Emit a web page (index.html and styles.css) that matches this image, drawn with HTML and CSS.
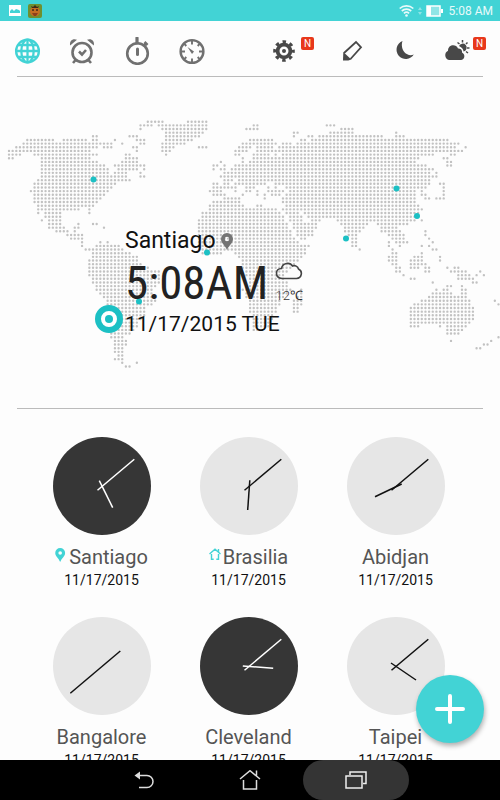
FILE: index.html
```html
<!DOCTYPE html>
<html lang="en">
<head>
  <meta charset="UTF-8" />
  <title>World Clock</title>
  <meta name="viewport" content="width=device-width, initial-scale=1.0" />
  <link rel="stylesheet" href="styles.css">
</head>

<body>

  <div class="status-bar">
    <div class="status-group">
      <svg width="12" height="11" viewBox="0 0 12 11"><rect width="12" height="11" fill="#fff"/><path d="M1 8V6l2-2 2 2 2-2 3 1 1 1v2z" fill="#42d3d5"/></svg>
      <svg width="14" height="14" viewBox="0 0 14 14"><rect width="14" height="14" rx="2" fill="#6f8f2e"/><circle cx="7" cy="7.500" r="5" fill="#c46d22"/><path d="M3 2l1 2h6l1-2-2 1-2-2-2 2z" fill="#3c2a18"/><circle cx="5" cy="6" r="1" fill="#3c2a18"/><circle cx="9" cy="6" r="1" fill="#3c2a18"/><path d="M4 9h6l-2 3H6z" fill="#8c3f1c"/></svg>
    </div>
    <div class="status-group status-right">
      <svg width="15" height="13" viewBox="0 0 15 13" fill="none" stroke="#e8fafa" stroke-width="1.700"><path d="M.7 4.500a10 10 0 0 1 13.600 0M2.800 7a7 7 0 0 1 9.400 0M4.900 9.300a4 4 0 0 1 5.200 0"/><circle cx="7.500" cy="11.500" r="1.300" fill="#e8fafa" stroke="none"/></svg>
      <svg width="4" height="10" viewBox="0 0 4 10" fill="#8fe5e6"><path d="M0 4l2-3 2 3zM0 6l2 3 2-3z"/></svg>
      <svg width="17" height="12" viewBox="0 0 17 12"><rect x="1" y="1" width="13" height="10" fill="#8fe5e6" stroke="#fff" stroke-width="1.500"/><rect x="1" y="1" width="4" height="10" fill="#fff"/><rect x="15" y="4" width="2" height="4" fill="#fff"/></svg>
      <span>5:08 AM</span>
    </div>
  </div>

  <header class="toolbar">
    <nav class="tabs">
      <button class="icon-btn active" aria-label="World clock">
        <svg width="28" height="28" viewBox="0 0 28 28" fill="none" stroke="currentColor" stroke-width="2.300"><circle cx="14.500" cy="14" r="11.400"/><ellipse cx="14.500" cy="14" rx="6.200" ry="11.400"/><path d="M14.500 2.500v23M3 14h23M5 8h19M5 20h19"/></svg>
      </button>
      <button class="icon-btn" aria-label="Alarm">
        <svg width="28" height="28" viewBox="0 0 28 28" fill="none" stroke="currentColor" stroke-width="2.600"><circle cx="14" cy="15.500" r="9.500"/><path d="M11 14.500l3 3 4-4.500M8 22.500L5 26M20 22.500l3 3.500"/><path d="M2.200 8.500C1 4 5 .800 9 2.800zM25.800 8.500C27 4 23 .800 19 2.800z" fill="currentColor" stroke="none"/></svg>
      </button>
      <button class="icon-btn" aria-label="Stopwatch">
        <svg width="28" height="28" viewBox="0 0 28 28" fill="none" stroke="currentColor" stroke-width="2.600"><circle cx="14.500" cy="16.500" r="10.300"/><path d="M14 6V1" stroke-width="3.200" stroke-linecap="round"/><path d="M14.500 12v5.500" stroke-width="3" stroke-linecap="round"/><path d="M20.500 9l2.500-3M21.500 5l3 3"/></svg>
      </button>
      <button class="icon-btn" aria-label="Timer">
        <svg width="28" height="28" viewBox="0 0 28 28" fill="none" stroke="currentColor" stroke-width="1.900"><circle cx="14" cy="14.500" r="11.400" stroke-width="2.400"/><path d="M14 3v4.500M14 21.500V26M2.500 14.500H7M21 14.500h4.500M5.900 6.400L8.300 9M22.100 6.400L19.700 9M5.900 22.600L8.300 20M22.100 22.600L19.700 20"/><path d="M9.500 10l6.500 4.500-2 2.500z" fill="currentColor" stroke="none"/></svg>
      </button>
    </nav>
    <div class="actions">
      <button class="icon-btn dark" aria-label="Settings">
        <svg width="28" height="28" viewBox="0 0 28 28" fill="none" stroke="currentColor"><circle cx="14" cy="14" r="6.400" stroke-width="3.800"/><circle cx="14" cy="14" r="9.300" stroke-width="3" stroke-dasharray="3.500 3.804" stroke-dashoffset="1.750"/><circle cx="14" cy="14" r="2" fill="currentColor" stroke="none"/></svg>
        <span class="badge">N</span>
      </button>
      <button class="icon-btn dark" aria-label="Edit">
        <svg width="28" height="28" viewBox="0 0 28 28" fill="none" stroke="currentColor" stroke-width="1.800"><path d="M6 16L18 5l5 5.300L12.500 22"/><path d="M5.300 15l8 7.500-3 1H5z" fill="currentColor" stroke="none"/></svg>
      </button>
      <button class="icon-btn dark" aria-label="Night mode">
        <svg width="28" height="28" viewBox="0 0 28 28" fill="currentColor"><path d="M12.500 4a9.300 9.300 0 1 0 11.300 13.500C17 20.500 9.500 13 12.500 4z"/></svg>
      </button>
      <button class="icon-btn dark" aria-label="Weather">
        <svg width="28" height="28" viewBox="0 0 28 28" fill="currentColor"><path d="M7 23a5 5 0 0 1-1-9.300C6 7.500 14 6.500 16 11.500c3-.5 4.500 2 4 4 4 2 2.500 7.500-1 7.500z"/><path d="M17 9a4 4 0 1 1 4.500 5.500c0-2-1.500-4-4.500-5.500z"/><path d="M20.500 3v2.500M15.500 5.500L17.500 7M25.500 5.500L24 7M25 11h2.500M24 14.500l2 1.500" stroke="currentColor" stroke-width="1.500"/></svg>
        <span class="badge">N</span>
      </button>
    </div>
  </header>

  <section class="map">
    <svg class="map-svg" id="worldMap" viewBox="0 0 500 331"></svg>
    <div class="here">
      <div class="here-city">
        Santiago
        <svg width="12" height="17" viewBox="0 0 12 17"><path d="M6 0a6 6 0 0 0-6 6c0 4 4 6 6 11 2-5 6-7 6-11a6 6 0 0 0-6-6zm0 3.800a2.200 2.200 0 1 1 0 4.400 2.200 2.200 0 0 1 0-4.400z" fill="#747474" fill-rule="evenodd"/></svg>
      </div>
      <div class="here-row">
        <span class="here-time">5:08AM</span>
        <span class="here-weather">
          <svg width="28" height="18" viewBox="0 0 28 18" fill="none" stroke="#444" stroke-width="1.600"><path d="M7 16.500h14.500a5 5 0 0 0 2-9.500 4.500 4.500 0 0 0-6-3C15 0 7.500.5 6.500 6.500 0 6.500-.5 15.500 7 16.500z"/></svg>
          <span>12℃</span>
        </span>
      </div>
      <div class="here-date">11/17/2015 TUE</div>
    </div>
  </section>

  <main class="clocks" id="clocks"></main>

  <button class="fab" aria-label="Add city">
    <svg width="30" height="30" viewBox="0 0 30 30" stroke="#fff" stroke-width="4" stroke-linecap="round"><path d="M15 2v26M2 15h26"/></svg>
  </button>

  <footer class="nav-bar">
    <button class="nav-btn" aria-label="Back">
      <svg width="22" height="20" viewBox="0 0 22 20" fill="none" stroke="#ddd" stroke-width="1.500"><path d="M5 5.500h9a6 6 0 0 1 0 12H6"/><path d="M1.500 5.500L7 1.500v8z" fill="#ddd" stroke="none"/></svg>
    </button>
    <button class="nav-btn" aria-label="Home">
      <svg width="22" height="20" viewBox="0 0 22 20" fill="none" stroke="#ddd" stroke-width="1.500"><path d="M1 9l10-8.300L21 9M17.500 5.500V.5M4.500 10v9h13v-9"/></svg>
    </button>
    <button class="nav-btn pressed" aria-label="Recent apps">
      <svg width="22" height="18" viewBox="0 0 22 18" fill="none" stroke="#eee" stroke-width="1.500"><rect x="1" y="5" width="16" height="12"/><path d="M5 4V1h16v11.500h-3"/></svg>
    </button>
  </footer>

  <script src="script.js"></script>
</body>
</html>
```

FILE: styles.css
```css
* {
  box-sizing: border-box;
}

body {
  font-family: Roboto, sans-serif;
  background: #fdfdfd;
  margin: 0;
  height: 100vh;
  display: flex;
  flex-direction: column;
  position: relative;
  overflow: hidden;
}

button {
  background: none;
  border: none;
  padding: 0;
  font-family: inherit;
  cursor: pointer;
}

svg {
  display: block;
  flex: none;
}

.status-bar {
  flex: none;
  height: 21px;
  padding: 0 7px 0 9px;
  background: #42d3d5;
  color: #e8fafa;
  font-size: 12px;
  display: flex;
  justify-content: space-between;
  align-items: center;
}

.status-group {
  display: flex;
  align-items: center;
  gap: 7px;
}

.status-right {
  gap: 4px;
}

.status-right span {
  margin-left: 2px;
}

.toolbar {
  flex: none;
  height: 56px;
  padding: 16px 14px 0 13px;
  display: flex;
  justify-content: space-between;
  position: relative;
}

.toolbar::after {
  content: "";
  position: absolute;
  left: 17px;
  right: 17px;
  bottom: 0;
  border-bottom: 1px solid #bbb;
}

.tabs {
  display: flex;
  gap: 27px;
}

.actions {
  display: flex;
  gap: 24px;
}

.icon-btn {
  height: 28px;
  display: flex;
  align-items: flex-start;
  gap: 3px;
  color: #707070;
}

.icon-btn.active {
  color: #42d3d5;
}

.icon-btn.dark {
  color: #484848;
}

.badge {
  width: 13px;
  height: 13px;
  border-radius: 2px;
  background: #e8381b;
  color: #fff;
  font-size: 10px;
  line-height: 13px;
  text-align: center;
}

.map {
  flex: none;
  position: relative;
  margin-bottom: 28px;
}

.map::after {
  content: "";
  display: block;
  margin: 0 17px;
  border-bottom: 1px solid #bbb;
}

.map-svg {
  width: 100%;
  height: auto;
}

/* label beside the selected city's marker */
.here {
  position: absolute;
  left: 25%;
  top: 151px;
  color: #111;
}

.here-city {
  display: flex;
  align-items: center;
  gap: 5px;
  font-size: 23px;
  line-height: 26px;
}

.here-row {
  display: flex;
  align-items: center;
  gap: 7px;
}

.here-time {
  font-family: "Roboto Condensed", "Liberation Sans Narrow", Roboto, sans-serif;
  font-size: 47px;
  line-height: 58px;
  color: #222;
}

.here-weather {
  font-size: 13px;
  font-weight: 300;
  line-height: 16px;
  color: #333;
  text-align: center;
}

.here-weather svg {
  margin-bottom: 8px;
}

.here-date {
  font-size: 21px;
  line-height: 24px;
}

.clocks {
  flex: 1;
  min-height: 0;
  overflow: hidden;
  padding: 0 31px 0 28px;
  display: grid;
  grid-template-columns: repeat(3, 1fr);
  grid-auto-rows: 180px;
}

.clock {
  text-align: center;
}

.clock-face {
  width: 98px;
  height: 98px;
  margin: 0 auto 9px;
  border-radius: 50%;
  background: #e6e6e6;
  stroke: #111;
  stroke-width: 1.5;
}

.clock.night .clock-face {
  background: #363636;
  stroke: #fff;
}

.clock-name {
  display: flex;
  justify-content: center;
  gap: 2px;
  font-size: 20px;
  line-height: 26px;
  color: #555;
}

.clock-name svg {
  margin-top: 4px;
}

.clock-date {
  font-size: 14px;
  line-height: 20px;
  color: #111;
}

.fab {
  position: absolute;
  right: 16px;
  bottom: 57px;
  width: 68px;
  height: 68px;
  border-radius: 50%;
  background: #42d3d5;
  box-shadow: 1px 3px 5px rgba(0, 0, 0, 0.3);
  display: flex;
  align-items: center;
  justify-content: center;
}

.nav-bar {
  flex: none;
  height: 40px;
  background: #000;
  display: flex;
  justify-content: center;
}

.nav-btn {
  width: 106px;
  height: 40px;
  border-radius: 20px;
  display: flex;
  align-items: center;
  justify-content: center;
}

.nav-btn.pressed {
  background: #343434;
}
```

FILE: script.js
```js
// Land cells of the dotted map, one string per row, as column ranges
const landRows = [
  "38-42 49-54",
  "36-39 41-54 67-68 87-89",
  "36 42-54 65-68 91-94",
  "43-53 78-79 88-94 106",
  "23-24 33-35 43-52 78 82-83 85-102 106-108",
  "5-12 15-21 23-24 29 35-37 43-50 66-72 80-81 83-120",
  "4-28 31 36-37 42-48 64-73 75-77 79-123",
  "2-24 26-28 34-35 42-45 52-54 63-66 68-72 74-122 125",
  "0-22 35 42-44 62-65 68-124",
  "0-3 7-24 32-33 43 62-63 67-71 73 75-116 121-122",
  "0-1 9-22 32-35 64 67-112 119-120",
  "9-24 31-35 58 64 66-111 120-121",
  "9-26 29-37 56-57 59 62-114 120-121",
  "9-27 30-35 37 56 58-59 61-116",
  "9-27 29-32 36 59-115 117",
  "9-32 36-37 58-117",
  "8-33 59-61 63-115",
  "7-29 56-57 59-60 62-70 73-115 118-119",
  "7-28 56-62 65-67 71 73 76-114 119",
  "6-27 55-58 62 65-66 68 71-75 77-111 113 119",
  "7-26 56-59 64 68 70 72-74 76-111 113-114 119",
  "7-25 59-63 70 75-111 114-115 117-119",
  "7-24 56-63 75-111",
  "8-23 55-64 68-69 76-112",
  "8-19 22 55-73 75-113",
  "8 10-14 22 53-74 76-79 81-112",
  "10-14 53-75 77-80 82-112",
  "9 11-14 52-75 77-80 83-85 90-111 113",
  "11-14 19 23-24 52-76 78-84 91-98 101-109",
  "11-15 18-19 26 52-76 78-84 92-97 102-106",
  "13-16 18 52-77 79-83 92-96 102-107 114",
  "16-20 52-77 79-83 93-95 104-108 114",
  "17-20 52-78 80-81 94-95 105-108 115",
  "20 25 27 52-79 94-95 104 106-109 116",
  "20 24-30 52-82 94-95 104 107 113 115",
  "21-31 52-81 96 105 116-117",
  "23-33 53-58 62-81 105-106 113",
  "23-35 63-80 104-106 111-113 118",
  "22-35 64-79 104-106 110-113 118",
  "22-36 64-78 105-106 110-114",
  "22-38 64-77 106-107 110-112 114-115 120 122-123",
  "22-41 65-76 106-107 114-115 121-125 129",
  "22-41 65-75 108 123-126 128 130",
  "23-41 66-75 110-111 123-127",
  "23-41 66-76 116 127-128",
  "24-40 66-76 120-121 124",
  "24-39 64-77 80 117 119-120 124-125",
  "25-39 65-76 80 116-121 124-125",
  "26-39 65-75 79-80 115-125",
  "27-40 66-74 78-80 113-126 133",
  "27-39 66-74 78-80 111-126 134",
  "28-37 66-73 78-79 110-127",
  "28-37 66-73 78-79 110-127",
  "28-37 67-72 110-127",
  "28-36 67-72 110-127",
  "28-35 67-71 110-126",
  "28-35 67-71 110-112 118 120-125",
  "28-34 67-69 120-124",
  "28-33 120-123",
  "28-31 134",
  "29-32 121 132",
  "29-32 130-131",
  "29-31 128-129",
  "29-31",
  "30-31",
  "29-31",
  "31 35",
  "32-33"
];

const pins = [[93.5, 102.5], [207, 175.5], [396.5, 111.5], [417, 139], [346, 161.5], [139, 224.5]];
const selected = [109, 242];

const pinIcon = `<svg width="12" height="14" viewBox="0 0 14 17"><path d="M6 0a6 6 0 0 0-6 6c0 4 4 6 6 11 2-5 6-7 6-11a6 6 0 0 0-6-6zm0 3.800a2.200 2.200 0 1 1 0 4.400 2.200 2.200 0 0 1 0-4.400z" fill="#42d3d5" fill-rule="evenodd" stroke="none"/></svg>`;
const homeIcon = `<svg width="12" height="12" viewBox="0 0 12 12" fill="none" stroke="#42d3d5" stroke-width="1.400"><path d="M.5 6L6 1.200 11.500 6M9.500 4V1M2.500 6v5.300h2.200M9.500 6v5.300H7.300"/></svg>`;

// hands are x1 y1 x2 y2 on a 98 x 98 face
const minuteHand = [44.5, 53.3, 81.3, 22.3];
const cities = [
  { name: "Santiago", icon: pinIcon, night: true, hands: [[46.3, 43.7, 59.7, 70.7], minuteHand] },
  { name: "Brasilia", icon: homeIcon, night: false, hands: [[49.8, 43.3, 47.7, 73], minuteHand] },
  { name: "Abidjan", icon: "", night: false, hands: [[54.7, 47, 28, 59.7], minuteHand] },
  { name: "Bangalore", icon: "", night: false, hands: [[67.3, 34, 17.3, 76.3]] },
  { name: "Cleveland", icon: "", night: true, hands: [[42.8, 49, 73.2, 51.3], minuteHand] },
  { name: "Taipei", icon: "", night: false, hands: [[44, 46, 69, 63], minuteHand] }
];

function renderMap() {
  const step = 3.653;
  let d = "";
  landRows.forEach((row, r) => {
    row.split(" ").forEach(range => {
      const [from, to = from] = range.split("-").map(Number);
      for (let c = from; c <= to; c++) {
        d += `M${(9 + c * step).toFixed(2)} ${(44.7 + r * step).toFixed(2)}h0`;
      }
    });
  });

  let svg = `<path d="${d}" stroke="#c2c2c2" stroke-width="2.4" stroke-linecap="round" />`;
  pins.forEach(([x, y]) => {
    svg += `<circle cx="${x}" cy="${y}" r="3" fill="#1cc0c4" />`;
  });
  svg += `<circle cx="${selected[0]}" cy="${selected[1]}" r="11" fill="#fff" stroke="#1cc0c4" stroke-width="6" />`;
  svg += `<circle cx="${selected[0]}" cy="${selected[1]}" r="4" fill="#1cc0c4" />`;
  document.getElementById("worldMap").innerHTML = svg;
}

function hand([x1, y1, x2, y2]) {
  return `<line x1="${x1}" y1="${y1}" x2="${x2}" y2="${y2}" />`;
}

function renderClocks() {
  const grid = document.getElementById("clocks");
  cities.forEach(city => {
    const clock = document.createElement("div");
    clock.className = city.night ? "clock night" : "clock";
    clock.innerHTML = `
      <svg class="clock-face" viewBox="0 0 98 98">${city.hands.map(hand).join("")}</svg>
      <div class="clock-name">${city.icon}<span>${city.name}</span></div>
      <div class="clock-date">11/17/2015</div>
    `;
    grid.appendChild(clock);
  });
}

renderMap();
renderClocks();
```
